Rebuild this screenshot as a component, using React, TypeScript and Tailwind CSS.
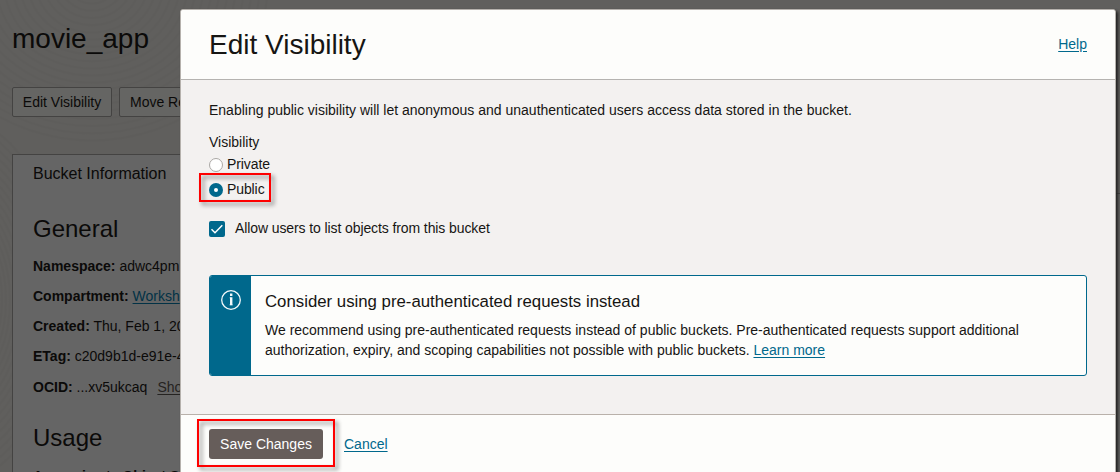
import type { ReactNode } from "react";

function Contours() {
  const radii = Array.from({ length: 22 }, (_, i) => 8 + i * 8);
  return (
    <svg className="absolute inset-0 h-full w-full" fill="none" stroke="#5c5b59" strokeWidth="2" opacity="0.35">
      {radii.map((r) => (
        <g key={r}>
          <ellipse cx="92" cy="-18" rx={r} ry={r * 0.9} />
          <ellipse cx="-30" cy="300" rx={r * 0.5} ry={r} />
        </g>
      ))}
    </svg>
  );
}

function Detail({ label, children, className = "h-[30px]" }: { label: string; children: ReactNode; className?: string }) {
  return (
    <div className={"leading-[20px] whitespace-nowrap " + className}>
      <span className="font-bold">{label}:</span> {children}
    </div>
  );
}

function BucketPage() {
  return (
    <div className="h-full w-[180px] overflow-hidden pt-[21px] pl-3">
      <h1 className="text-[28px] leading-9">movie_app</h1>
      <div className="mt-[30px] flex gap-[7px]">
        <button className="h-[30px] w-[100px] shrink-0 rounded-[2px] border border-[#444342] bg-[#656563]">Edit Visibility</button>
        <button className="h-[30px] w-[122px] shrink-0 overflow-hidden rounded-[2px] border border-[#444342] bg-[#656563] pl-[10px] text-left">
          Move Re
        </button>
      </div>
      <div className="mt-[37px] h-[318px] w-[200px] border-t border-l border-[#444342] bg-[#656565] pl-5">
        <div className="pt-2 text-[16px] leading-[22px]">Bucket Information</div>
        <h2 className="mt-[29px] text-[24px] leading-[30px]">General</h2>
        <div className="mt-[12px]">
          <Detail label="Namespace">adwc4pm</Detail>
          <Detail label="Compartment">
            <span className="text-[#023246] underline underline-offset-2">Worksh</span>
          </Detail>
          <Detail label="Created">Thu, Feb 1, 20</Detail>
          <Detail label="ETag" className="h-[31px]">c20d9b1d-e91e-4</Detail>
          <Detail label="OCID">
            ...xv5ukcaq<span className="ml-[10px] text-[#252321] underline underline-offset-2">Sho</span>
          </Detail>
        </div>
        <h2 className="mt-[16px] text-[24px] leading-[30px]">Usage</h2>
        <div className="mt-[13px] font-bold whitespace-nowrap">Approximate Object S</div>
      </div>
    </div>
  );
}

function Radio({ checked = false, label }: { checked?: boolean; label: string }) {
  return (
    <label className="flex h-[25px] items-center gap-1 tracking-[-0.1px]">
      <span
        className={
          "mt-[2px] flex size-[14px] items-center justify-center rounded-full " +
          (checked ? "bg-[#00688c]" : "border border-[#aaa8a5] bg-white")
        }
      >
        {checked && <span className="size-1 rounded-full bg-white" />}
      </span>
      {label}
    </label>
  );
}

const linkClass = "text-[#00688c] underline underline-offset-2";

function EditVisibilityDialog() {
  return (
    <section className="absolute top-[9px] left-[180px] flex h-[480px] w-[936px] flex-col rounded-t-[3px] border border-[#b5b1ac] bg-[#f3f1f0] shadow-[2px_2px_3px_#222]">
      <header className="flex h-[70px] shrink-0 items-center justify-between rounded-t-[2px] border-b border-[#b5b3b0] bg-[#fdfdfb] px-7">
        <h1 className="text-[28px] leading-9">Edit Visibility</h1>
        <a className={"mb-[2px] " + linkClass}>Help</a>
      </header>
      <div className="h-[334px] shrink-0 px-7 pt-5">
        <p className="leading-5">Enabling public visibility will let anonymous and unauthenticated users access data stored in the bucket.</p>
        <p className="mt-3 leading-5">Visibility</p>
        <div className="-mt-px">
          <Radio label="Private" />
          <Radio label="Public" checked />
        </div>
        <label className="mt-[17px] flex h-5 items-center gap-[10px] tracking-[-0.1px]">
          <span className="mt-[2px] flex size-4 items-center justify-center rounded-[2px] bg-[#00688c]">
            <svg width="16" height="16" viewBox="0 0 16 16" fill="none" stroke="white" strokeWidth="1.5">
              <path d="M2.5 8.3 6 11.8 13.3 4.3" />
            </svg>
          </span>
          Allow users to list objects from this bucket
        </label>
        <aside className="mt-[37px] flex h-[101px] overflow-hidden rounded-[3px] border border-[#00688c] bg-[#fdfdfb]">
          <div className="w-[41px] shrink-0 bg-[#00688c] pt-[14px] pl-[11px]">
            <svg width="20" height="20" viewBox="0 0 20 20" fill="none" stroke="#f3f9fb">
              <circle cx="10" cy="10" r="9.3" strokeWidth="1.3" />
              <path d="M8.4 7.8H10M8.2 14.8H12" strokeWidth="0.8" opacity=".5" />
              <path d="M10.2 7.2V15.2" strokeWidth="2.4" />
              <path d="M10.2 3.5V5.9" strokeWidth="2.4" />
            </svg>
          </div>
          <div className="pt-[15px] pl-[14px]">
            <h2 className="text-[16.8px] leading-[22px]">Consider using pre-authenticated requests instead</h2>
            <p className="mt-[7px] leading-5">
              We recommend using pre-authenticated requests instead of public buckets. Pre-authenticated requests support additional
              <br />
              authorization, expiry, and scoping capabilities not possible with public buckets. <a className={linkClass}>Learn more</a>
            </p>
          </div>
        </aside>
      </div>
      <footer className="flex grow items-start border-t border-[#b9b1aa] bg-[#fdfdfb] pt-[14px] pl-7">
        <button className="h-[30px] w-[114px] rounded-[3px] bg-[#665d5a] text-white">Save Changes</button>
        <a className={"mt-[5px] ml-[21px] leading-5 " + linkClass}>Cancel</a>
      </footer>
    </section>
  );
}

export default function App() {
  return (
    <main className="relative h-[472px] w-[1120px] overflow-hidden bg-[#605f5d] font-['Liberation_Sans',Arial,sans-serif] text-[14px] leading-5 text-[#0b0a09]">
      <Contours />
      <div className="relative flex h-full justify-between">
        <BucketPage />
        <div className="mt-[193px] w-5 border-t border-[#444342] bg-[#636362]" />
      </div>
      <div className="text-[#161513]">
        <EditVisibilityDialog />
      </div>
      <div className="absolute top-[173px] left-[199px] h-[29px] w-[72px] border-2 border-[#fe0000] drop-shadow-[3px_3px_2px_#0007]" />
      <div className="absolute top-[419px] left-[197px] h-[48px] w-[138px] border-2 border-[#fe0000] drop-shadow-[3px_3px_2px_#0007]" />
    </main>
  );
}
